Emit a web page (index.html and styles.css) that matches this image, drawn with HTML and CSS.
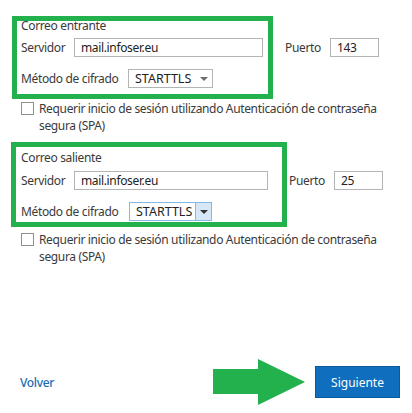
FILE: index.html
```html
<!DOCTYPE html>
<html lang="es">
<head>
<meta charset="utf-8">
<title>Configuración de cuenta</title>
<link rel="stylesheet" href="styles.css">
</head>
<body>
<div class="page">
  <section class="acct acct-in">
    <div class="acct-title">Correo entrante</div>
    <div class="row row-server">
      <span class="lbl lbl-server">Servidor</span>
      <div class="field field-server">mail.infoser.eu</div>
      <span class="lbl lbl-port">Puerto</span>
      <div class="field field-port">143</div>
    </div>
    <div class="row row-method">
      <span class="lbl lbl-method">Método de cifrado</span>
      <div class="select"><span class="select-text">STARTTLS</span><span class="caret-box"><span class="caret"></span></span></div>
    </div>
    <div class="check-row">
      <span class="checkbox"></span>
      <span class="check-text">Requerir inicio de sesión utilizando Autenticación de contraseña<br>segura (SPA)</span>
    </div>
  </section>

  <section class="acct acct-out">
    <div class="acct-title">Correo saliente</div>
    <div class="row row-server">
      <span class="lbl lbl-server">Servidor</span>
      <div class="field field-server">mail.infoser.eu</div>
      <span class="lbl lbl-port">Puerto</span>
      <div class="field field-port">25</div>
    </div>
    <div class="row row-method">
      <span class="lbl lbl-method">Método de cifrado</span>
      <div class="select select-hover"><span class="select-text">STARTTLS</span><span class="caret-box"><span class="caret"></span></span></div>
    </div>
    <div class="check-row">
      <span class="checkbox"></span>
      <span class="check-text">Requerir inicio de sesión utilizando Autenticación de contraseña<br>segura (SPA)</span>
    </div>
  </section>

  <footer class="footer">
    <a class="back">Volver</a>
    <svg class="arrow" width="94" height="48" viewBox="0 0 94 48" aria-hidden="true">
      <path d="M1 11 H46 V1 L93 24 L46 47 V36 H1 Z" fill="#22b14c"/>
    </svg>
    <button class="next">Siguiente</button>
  </footer>

  <div class="annot annot-in"></div>
  <div class="annot annot-out"></div>
</div>
</body>
</html>
```

FILE: styles.css
```css
* { box-sizing: border-box; }

html, body {
  margin: 0;
  padding: 0;
  background: #ffffff;
}

body {
  font-family: "Noto Sans", "Open Sans", sans-serif;
  font-size: 12px;
  letter-spacing: -0.35px;
  color: #3a3a3a;
}

.page {
  position: relative;
  width: 412px;
  height: 413px;
  display: flex;
  flex-direction: column;
}

.acct {
  padding-left: 21px;
  display: flex;
  flex-direction: column;
}

.acct-in { margin-top: 18px; }
.acct-out { margin-top: 16px; }

.acct-title {
  line-height: 16px;
  height: 16px;
}

.row {
  display: flex;
  align-items: center;
  height: 19px;
}

.acct-in .row-server { margin-top: 4px; }
.acct-in .row-method { margin-top: 12px; }
.acct-out .row-server { margin-top: 5px; }
.acct-out .row-method { margin-top: 12px; }

.lbl {
  line-height: 19px;
  white-space: nowrap;
}

.lbl-server { width: 53px; }
.lbl-method { width: 107px; }
.acct-out .lbl-method { width: 108px; }

.lbl-port {
  width: 45px;
  margin-left: 22px;
}
.acct-out .lbl-port { margin-left: 21px; }

.field {
  height: 19px;
  border: 1px solid #b4b4b4;
  padding-left: 6px;
  line-height: 17px;
  color: #222222;
  background: #ffffff;
}

.field-server { width: 189px; }
.acct-out .field-server { width: 194px; }

.field-port { width: 49px; }

.select {
  width: 85px;
  height: 19px;
  border: 1px solid #b4b4b4;
  display: flex;
  align-items: stretch;
  background: #ffffff;
  color: #222222;
}
.acct-out .select { width: 83px; }

.select-text {
  flex: 1;
  padding-left: 6px;
  line-height: 17px;
  font-size: 12.5px;
  letter-spacing: 0;
}

.caret-box {
  width: 16px;
  display: flex;
  align-items: center;
  justify-content: center;
}

.caret {
  width: 0;
  height: 0;
  border-left: 4px solid transparent;
  border-right: 4px solid transparent;
  border-top: 4px solid #6e6e6e;
}

.select-hover {
  border-color: #86b8e4;
}
.select-hover .caret-box {
  background: #d6e8f8;
  border-left: 1px solid #86b8e4;
}
.select-hover .caret {
  border-top-color: #333333;
}

.check-row {
  display: flex;
  align-items: flex-start;
}
.acct-in .check-row { margin-top: 12px; }
.acct-out .check-row { margin-top: 10px; }

.checkbox {
  width: 13px;
  height: 13px;
  border: 1px solid #8f8f8f;
  margin-top: 2px;
  margin-right: 5px;
  flex: none;
  background: #ffffff;
}

.check-text {
  line-height: 17px;
}

.footer {
  margin-top: auto;
  display: flex;
  align-items: center;
  padding: 0 12px 7px 20px;
}

.back {
  flex: 1;
  color: #1a6bb5;
  font-weight: 500;
  font-size: 12px;
}

.arrow {
  display: block;
  flex: none;
  margin-right: 9px;
}

.next {
  width: 85px;
  height: 32px;
  background: #106ebe;
  border: 1px solid #0b5a9e;
  color: #ffffff;
  font-family: inherit;
  font-size: 12px;
  font-weight: 400;
  letter-spacing: 0;
  padding: 0;
}

.annot {
  position: absolute;
  border: 5px solid #22b14c;
  pointer-events: none;
}

.annot-in {
  left: 12px;
  top: 16px;
  width: 261px;
  height: 83px;
}

.annot-out {
  left: 11px;
  top: 142px;
  width: 276px;
  height: 85px;
}
```
